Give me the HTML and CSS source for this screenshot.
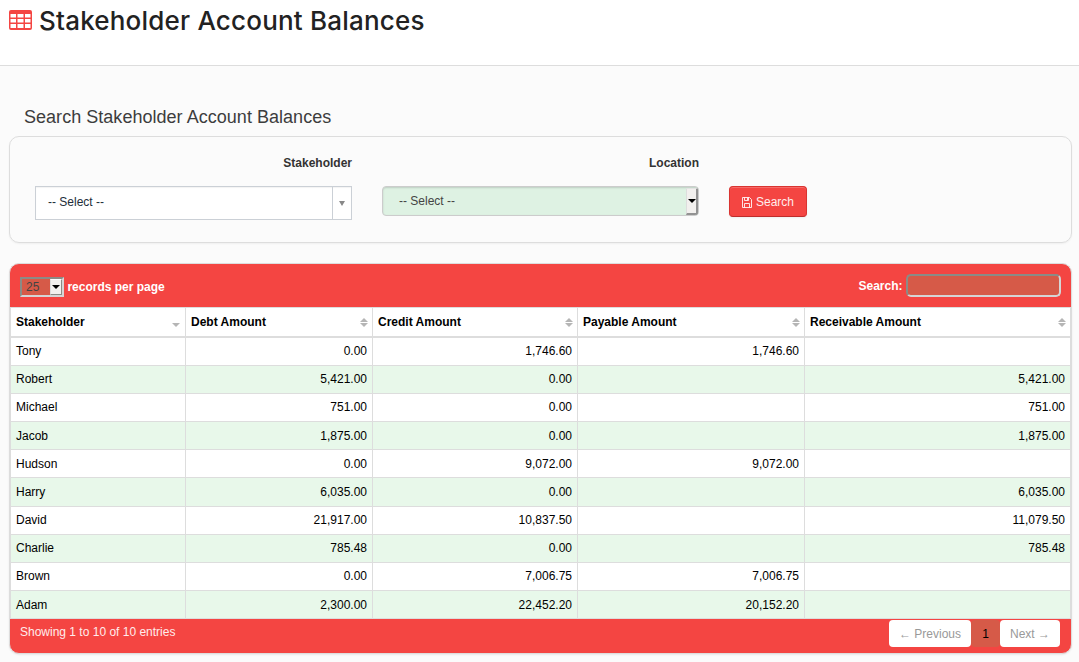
FILE: index.html
```html
<!DOCTYPE html>
<html lang="en">
<head>
<meta charset="utf-8">
<title>Stakeholder Account Balances</title>
<link rel="stylesheet" href="styles.css">
</head>
<body>
<header class="page-header">
  <svg class="title-icon" viewBox="0 0 23 20" width="23" height="20"><path fill="#f44542" fill-rule="evenodd" d="M2 0h19q2 0 2 2v16q0 2-2 2H2q-2 0-2-2V2q0-2 2-2zM1.500 4v3.500h5.500V4zM8.500 4v3.500h6V4zM16 4v3.500h5.500V4zM1.500 9v3.500h5.500V9zM8.500 9v3.500h6V9zM16 9v3.500h5.500V9zM1.500 14v4h5.500v-4zM8.500 14v4h6v-4zM16 14v4h5.500v-4z"/></svg>
  <h1>Stakeholder Account Balances</h1>
</header>
<main>
  <h2>Search Stakeholder Account Balances</h2>
  <form class="filters">
    <div class="field">
      <label>Stakeholder</label>
      <div class="combo"><span>-- Select --</span><i class="combo-arrow"></i></div>
    </div>
    <div class="field">
      <label>Location</label>
      <div class="select"><span>-- Select --</span><i class="select-arrow"></i></div>
    </div>
    <button type="button" class="btn"><svg viewBox="0 0 10 12" width="10" height="12"><path fill="none" stroke="#fff" stroke-opacity=".85" d="M.5 1.500h7l2 2v8h-9zM2.500 1.500v3h4v-3M2.500 11.500v-4h5v4M5.500 2v2"/></svg>Search</button>
  </form>
  <section class="grid-panel">
    <div class="grid-top">
      <div class="length"><span class="mini">25<i class="mini-arrow"></i></span>records per page</div>
      <label class="search">Search:<input type="text"></label>
    </div>
    <table>
      <colgroup><col class="c1"><col class="c2"><col class="c3"><col class="c4"><col class="c5"></colgroup>
      <thead><tr>
        <th class="desc">Stakeholder</th><th class="both">Debt Amount</th><th class="both">Credit Amount</th><th class="both">Payable Amount</th><th class="both">Receivable Amount</th>
      </tr></thead>
      <tbody>
        <tr><td>Tony</td><td>0.00</td><td>1,746.60</td><td>1,746.60</td><td></td></tr>
        <tr><td>Robert</td><td>5,421.00</td><td>0.00</td><td></td><td>5,421.00</td></tr>
        <tr><td>Michael</td><td>751.00</td><td>0.00</td><td></td><td>751.00</td></tr>
        <tr><td>Jacob</td><td>1,875.00</td><td>0.00</td><td></td><td>1,875.00</td></tr>
        <tr><td>Hudson</td><td>0.00</td><td>9,072.00</td><td>9,072.00</td><td></td></tr>
        <tr><td>Harry</td><td>6,035.00</td><td>0.00</td><td></td><td>6,035.00</td></tr>
        <tr><td>David</td><td>21,917.00</td><td>10,837.50</td><td></td><td>11,079.50</td></tr>
        <tr><td>Charlie</td><td>785.48</td><td>0.00</td><td></td><td>785.48</td></tr>
        <tr><td>Brown</td><td>0.00</td><td>7,006.75</td><td>7,006.75</td><td></td></tr>
        <tr class="last"><td>Adam</td><td>2,300.00</td><td>22,452.20</td><td>20,152.20</td><td></td></tr>
      </tbody>
    </table>
    <div class="grid-foot">
      <span class="info">Showing 1 to 10 of 10 entries</span>
      <div class="pager"><span class="prev">← Previous</span><span class="current">1</span><span class="next">Next →</span></div>
    </div>
  </section>
</main>
</body>
</html>
```
FILE: styles.css
```css
* { box-sizing: border-box; }
body { margin: 0; height: 662px; overflow: hidden; background: #fbfbfb; color: #333; font: 12px/17.14px "Liberation Sans", Arial, sans-serif; }
.page-header { height: 66px; padding: 10px 0 0 9px; display: flex; align-items: flex-start; background: #fff; border-bottom: 1px solid #ddd; }
h1 { margin: -4px 0 0 7px; font: 500 26px/30px Inter, sans-serif; letter-spacing: .2px; color: #222; white-space: nowrap; }
main { padding: 0 7px 0 9px; }
h2 { margin: 0; padding: 41px 0 0 15px; height: 70px; font-size: 18px; line-height: 20px; font-weight: 400; letter-spacing: .03px; color: #3d3d3d; }
.filters { width: 1063px; height: 107px; padding: 17px 0 0 25px; display: flex; gap: 30px; border: 1px solid #ddd; border-radius: 10px; box-shadow: 0 1px 2px rgba(0,0,0,.05); }
.field { width: 317px; }
.field label { display: block; height: 32px; text-align: right; font-weight: 700; line-height: 18px; }
.combo { height: 34px; display: flex; justify-content: space-between; border: 1px solid #cbd0d6; background: #fff; box-shadow: inset 0 1px 1px rgba(0,0,0,.05); line-height: 31px; color: #222d3a; }
.combo span { padding-left: 12px; }
.combo-arrow { width: 19px; border-left: 1px solid #cbd0d6; display: flex; align-items: center; justify-content: center; }
.combo-arrow::after { content: ""; border: solid transparent; border-width: 5px 3px 0; border-top-color: #888; margin: 0 1px 0 0; }
.select { height: 30px; display: flex; justify-content: space-between; border: 1px solid #ccc; border-radius: 4px; background: #def2e3; box-shadow: inset 0 1px 2px rgba(0,0,0,.15); line-height: 28px; color: #444; overflow: hidden; }
.select span { padding-left: 16px; }
.select-arrow { width: 12px; margin-top: 1px; background: #f2f0ee; border: solid; border-width: 1px 2px 2px 1px; border-color: #e4e4e4 #929292 #929292 #ddd; display: flex; align-items: center; justify-content: center; }
.select-arrow::after, .mini-arrow::after { content: ""; border: solid transparent; border-width: 4px 4px 0; border-top-color: #000; }
.btn { width: 78px; height: 31px; margin-top: 32px; padding: 0; display: flex; align-items: center; justify-content: center; gap: 4px; border: 1px solid #d93431; border-bottom-color: #be2d2b; border-radius: 4px; background: #f44542; box-shadow: inset 0 1px 0 rgba(255,255,255,.2), 0 1px 2px rgba(0,0,0,.05); color: #ffecec; font: 12px "Liberation Sans", Arial, sans-serif; }
.grid-panel { width: 1063px; height: 391px; margin-top: 20px; border: 1px solid #ddd; border-radius: 10px; background: #f44542; box-shadow: 0 1px 2px rgba(0,0,0,.08); overflow: hidden; }
.grid-top { height: 43px; padding: 10px; display: flex; justify-content: space-between; color: #fff; font-weight: 700; }
.length { display: flex; align-items: center; height: 26px; gap: 3.400px; padding-top: 1px; }
.mini { width: 44px; height: 20px; margin-top: -1px; display: flex; justify-content: space-between; padding-left: 4px; line-height: 16px; font-weight: 400; color: #444; background: #d65a48; border: 2px solid; border-color: #8b8b86 #d5d5d5 #d5d5d5 #8b8b86; }
.mini-arrow { width: 12px; background: #f2f0ee; border: 1px solid; border-color: #fff #8b8b86 #8b8b86 #ddd; display: flex; align-items: center; justify-content: center; }
.search { display: flex; line-height: 24px; gap: 3.500px; }
.search input { width: 155px; height: 23px; padding: 0; border: 2px solid; border-color: #8b8b86 #d5d5d5 #d5d5d5 #8b8b86; border-radius: 5px; background: #d65a48; }
table { width: 1061px; table-layout: fixed; border-spacing: 0; background: #fff; color: #000; border: solid #ddd; border-width: 0 1px 1px; }
.c1 { width: 174px; } .c2 { width: 187px; } .c3 { width: 205px; } .c4 { width: 227px; }
th, td { padding: 5.300px 5px 4.700px; border-top: 1px solid #ddd; border-left: 1px solid #ddd; text-align: right; line-height: 17.14px; height: 28.100px; }
td { line-height: 17.100px; }
.last td { padding-top: 5.900px; padding-bottom: 4.100px; }
th:first-child, td:first-child { border-left: 0; text-align: left; }
th { height: 30px; padding-top: 6px; padding-bottom: 5px; line-height: 17px; text-align: left; border-bottom: 1px solid #ddd; position: relative; white-space: nowrap; }
.both::before, th::after { content: ""; position: absolute; right: 5px; border: solid transparent; border-width: 0 4px 4px; border-bottom-color: #b5b5b5; top: 10px; }
th::after { top: 15px; border-width: 4px 4px 0; border-top-color: #b5b5b5; }
.both::before, .both::after { right: 4px; }
tbody tr:nth-child(even) { background: #e8f8ea; }
.grid-foot { display: flex; justify-content: space-between; padding: 1px 11px 0 10px; color: #fff; }
.info { line-height: 25px; color: #ffecec; }
.pager { display: flex; line-height: 28px; }
.pager span { height: 27px; text-align: center; border-radius: 4px; background: #fff; color: #999; }
.pager .prev { width: 82px; } .pager .next { width: 60px; }
.pager .current { width: 29px; background: #d65a48; color: #000; }
```
